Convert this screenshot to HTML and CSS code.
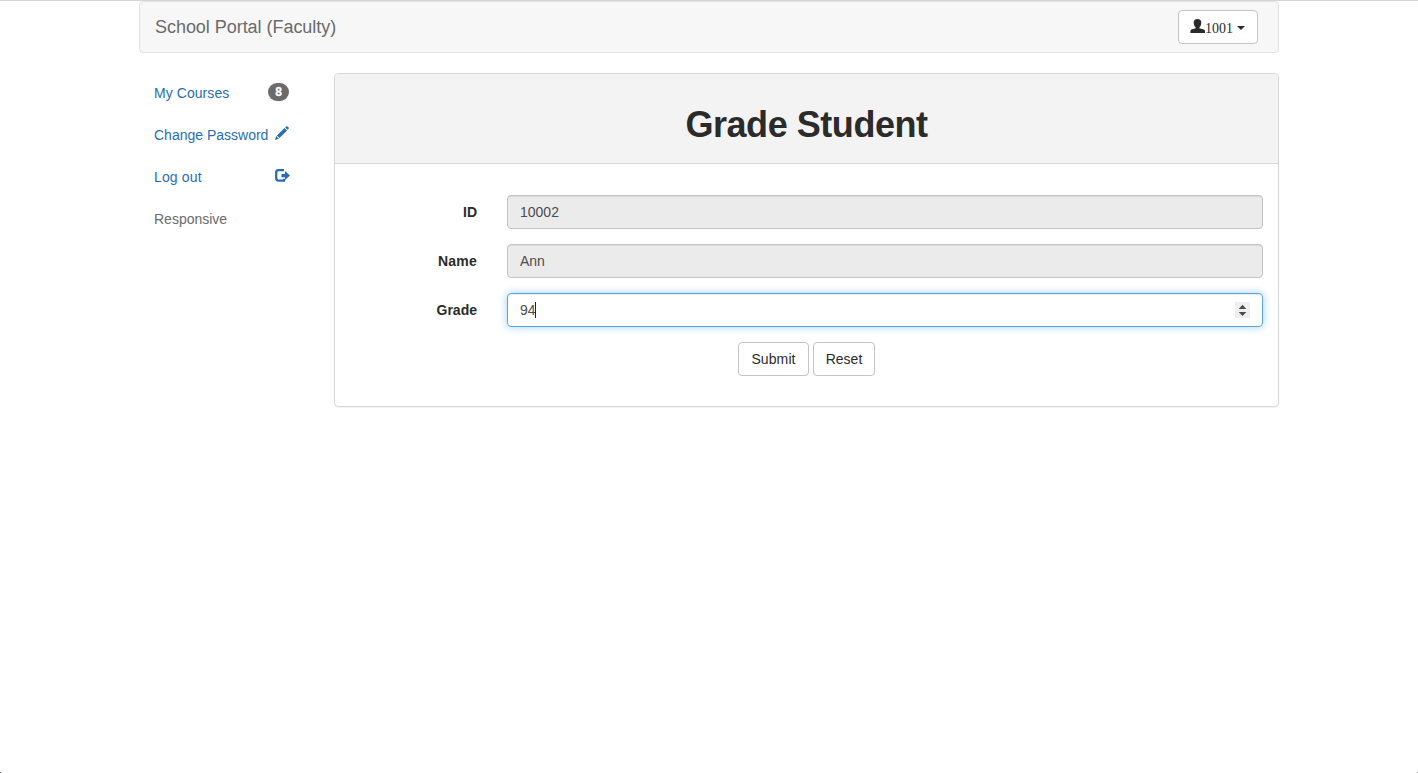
FILE: index.html
```html
<!DOCTYPE html>
<html lang="en">
<head>
<meta charset="utf-8">
<title>School Portal</title>
<link rel="stylesheet" href="styles.css">
</head>
<body>
<div class="container">
  <nav class="navbar">
    <a class="brand">School Portal (Faculty)</a>
    <button class="btn user-btn" type="button"><svg class="user-icon" width="15" height="14" viewBox="0 0 15 14"><path d="M7.500 0C5 0 3.700 1.400 3.700 3.500c0 2.200.8 3.900 1.900 4.900v.5c0 .4-.2.500-.7.700L1.500 10.600C.8 10.900.4 11.400.4 12.200V14h14.600v-1.800c0-.8-.4-1.300-1.100-1.600L10.100 9.600c-.5-.2-.7-.3-.7-.7v-.5c1.100-1 1.900-2.700 1.900-4.900C11.300 1.400 10 0 7.500 0z"/></svg><span class="user-id">1001</span><span class="caret-down"></span></button>
  </nav>
  <div class="columns">
    <aside class="sidebar">
      <a class="side-link"><span class="t-courses">My Courses</span><span class="badge">8</span></a>
      <a class="side-link"><span class="t-password">Change Password</span><svg class="pencil" width="14" height="14" viewBox="0 0 14 14"><path d="M11.200.4a1 1 0 0 1 1.300 0l1.100 1.100a1 1 0 0 1 0 1.300l-1 1-2.400-2.400zM9.500 1.900l2.600 2.600-7.600 7.600-2.600-2.600zM1.300 10.100l2.600 2.600L0 14z"/></svg></a>
      <a class="side-link"><span class="t-logout">Log out</span><svg class="logout" width="15" height="13" viewBox="0 0 15 13"><path d="M9 1.200H3.500Q1.200 1.200 1.200 3.500v5.800Q1.200 11.600 3.500 11.600H9V9.800" fill="none" stroke="currentColor" stroke-width="2.300"/><path d="M6.500 4.900H10V2l5 4.500-5 4.500V8.200H6.500z"/></svg></a>
      <span class="side-link muted"><span class="t-resp">Responsive</span></span>
    </aside>
    <main class="panel">
      <header class="panel-head"><h1>Grade Student</h1></header>
      <form class="panel-body">
        <div class="row"><label>ID</label><div class="control disabled">10002</div></div>
        <div class="row"><label class="wide">Name</label><div class="control disabled">Ann</div></div>
        <div class="row"><label>Grade</label><div class="control focused"><span>94</span><span class="text-cursor"></span><svg class="spinner" width="15" height="16" viewBox="0 0 15 16"><path d="M7.500 2.700L11.300 7H3.700zM3.700 10h7.600L7.500 14z"/></svg></div></div>
        <div class="actions"><button class="btn submit" type="button">Submit</button><button class="btn reset" type="button">Reset</button></div>
      </form>
    </main>
  </div>
</div>
</body>
</html>
```
FILE: styles.css
```css
* { box-sizing: border-box; }
body {
  margin: 0;
  min-height: 100vh;
  border-top: 1px solid #d5d5d8;
  background:
    linear-gradient(#74747c, #74747c) left bottom / 1px 1px no-repeat,
    linear-gradient(#a8a8a8, #a8a8a8) right bottom / 1px 1px no-repeat,
    #fff;
  color: #333;
  font: 14px/20px "Liberation Sans", Arial, sans-serif;
}
svg { fill: currentColor; flex: none; }
.container { width: 1140px; margin: 0 auto; }
.navbar {
  height: 52px;
  display: flex;
  justify-content: space-between;
  align-items: center;
  padding: 0 20px 0 15px;
  background: #f7f7f7;
  border: 1px solid #e3e3e3;
  border-radius: 4px;
}
.brand { font-size: 18px; letter-spacing: -.04px; color: #6b6b6b; }
.btn {
  height: 34px;
  padding: 0 12px;
  border: 1px solid #c4c4c4;
  border-radius: 4px;
  background: #fff;
  color: #2b2b2b;
  font: 14px/20px "Liberation Sans", Arial, sans-serif;
}
.user-btn {
  width: 80px;
  padding: 0 11px;
  display: flex;
  align-items: center;
  font-family: "Liberation Serif", "Times New Roman", serif;
}
.user-icon { margin-top: -2px; }
.user-id { margin-top: 3px; }
.caret-down {
  margin: 2px 0 0 4px;
  border: 4px solid transparent;
  border-top-color: #2b2b2b;
  border-bottom: 0;
}
.columns { display: flex; gap: 30px; margin-top: 20px; }
.sidebar { width: 165px; display: flex; flex-direction: column; gap: 2px; }
.side-link {
  height: 40px;
  padding: 0 15px;
  display: flex;
  align-items: center;
  justify-content: space-between;
  color: #296fae;
}
.side-link.muted { color: #6b6b6b; }
.t-courses { letter-spacing: .06px; }
.t-logout { letter-spacing: .15px; }
.badge {
  width: 21px;
  height: 18px;
  margin-top: -2px;
  border-radius: 10px;
  background: #6b6b6b;
  color: #fff;
  font-size: 12px;
  font-weight: bold;
  line-height: 18px;
  text-align: center;
  -webkit-text-stroke: .3px #fff;
}
.pencil { margin-top: -4px; }
.logout { margin: -3px -1px 0 0; }
.panel {
  width: 945px;
  height: 334px;
  border: 1px solid #d7d7d7;
  border-radius: 4px;
  box-shadow: 0 1px 1px rgba(0, 0, 0, .05);
}
.panel-head {
  height: 90px;
  padding-top: 31px;
  background: #f3f3f3;
  border-bottom: 1px solid #d7d7d7;
  border-radius: 3px 3px 0 0;
}
h1 {
  margin: 0;
  font-size: 36px;
  line-height: 40px;
  text-align: center;
  letter-spacing: -.45px;
  color: #2b2b2b;
}
.panel-body {
  padding: 31px 15px 0;
  display: flex;
  flex-direction: column;
  gap: 15px;
}
.row { display: flex; align-items: center; gap: 30px; }
label { width: 127px; text-align: right; font-weight: bold; color: #2b2b2b; }
label.wide { letter-spacing: .2px; }
.control {
  flex: 1;
  height: 34px;
  padding: 0 12px;
  display: flex;
  align-items: center;
  border: 1px solid #c4c4c4;
  border-radius: 4px;
  box-shadow: inset 0 1px 1px rgba(0, 0, 0, .075);
  color: #4c4c4c;
}
.disabled { background: #ebebeb; }
.focused {
  border-color: #5aa6e4;
  box-shadow: inset 0 1px 1px rgba(0, 0, 0, .075), 0 0 8px rgba(102, 175, 233, .6);
}
.text-cursor { width: 1px; height: 16px; margin-left: -1px; background: #222; }
.spinner { margin-left: auto; background: #efefef; }
.actions { display: flex; justify-content: center; gap: 4px; }
.submit { width: 71px; padding: 0 11px; letter-spacing: .1px; }
.reset { width: 62px; padding: 0 11px; }
```
